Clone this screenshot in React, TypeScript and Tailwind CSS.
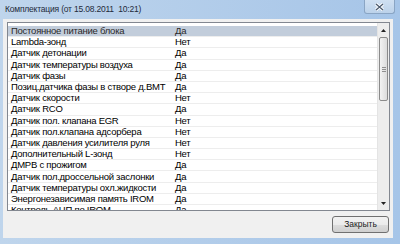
import React from "react";

type Row = { name: string; value: string };

const rows: Row[] = [
  { name: "Постоянное питание блока", value: "Да" },
  { name: "Lambda-зонд", value: "Нет" },
  { name: "Датчик детонации", value: "Да" },
  { name: "Датчик температуры воздуха", value: "Да" },
  { name: "Датчик фазы", value: "Да" },
  { name: "Позиц.датчика фазы в створе д.ВМТ", value: "Да" },
  { name: "Датчик скорости", value: "Нет" },
  { name: "Датчик RCO", value: "Да" },
  { name: "Датчик пол. клапана EGR", value: "Нет" },
  { name: "Датчик пол.клапана адсорбера", value: "Нет" },
  { name: "Датчик давления усилителя руля", value: "Нет" },
  { name: "Дополнительный L-зонд", value: "Нет" },
  { name: "ДМРВ с прожигом", value: "Да" },
  { name: "Датчик пол.дроссельной заслонки", value: "Да" },
  { name: "Датчик температуры охл.жидкости", value: "Да" },
  { name: "Энергонезависимая память IROM", value: "Да" },
  { name: "Контроль АЦП по IROM", value: "Да" },
];

export default function App() {
  return (
    <div
      className="w-[400px] h-[244px] flex flex-col bg-[linear-gradient(to_right,#bfd5ec,#a6c5e8)] text-black overflow-hidden"
      style={{ fontFamily: '"Liberation Sans", Arial, sans-serif' }}
    >
      {/* title bar */}
      <div className="h-[19px] flex items-start justify-between shrink-0">
        <div className="pl-[5px] pt-[3px] text-[8.5px] tracking-[-0.2px] leading-[12px] text-[#1e2a3a] whitespace-nowrap">
          Комплектация (от 15.08.2011&nbsp;&nbsp;10:21)
        </div>
        <button
          type="button"
          className="mr-[5px] w-[31px] h-[14px] flex items-center justify-center rounded-b-[3px] border border-t-0 border-[#8aa5c4] bg-[linear-gradient(#cfe0f2,#bcd2ea)]"
        >
          <svg width="9" height="8" viewBox="0 0 9 8">
            <path d="M1 1 L8 7 M8 1 L1 7" stroke="#ffffff" strokeWidth="3" />
            <path d="M1 1 L8 7 M8 1 L1 7" stroke="#4b5a6e" strokeWidth="1.3" />
          </svg>
        </button>
      </div>

      {/* client area */}
      <div className="flex-1 ml-[3px] mr-[7px] mb-[6px] flex flex-col bg-[#f0f0f0] pl-[4px] pr-[3px] pt-[3px]">
        <div className="h-[189px] flex border border-[#828790] bg-white overflow-hidden text-[9.5px] tracking-[-0.25px]">
          <div className="flex-1 pt-[3px] overflow-hidden">
            {rows.map((r, i) => (
              <div
                key={i}
                className={
                  "h-[11.2px] flex items-center border-b border-[#ededed] leading-[10px] " +
                  (i === 0 ? "bg-[#c2cddb] text-[#2a2a2a]" : "")
                }
              >
                <div className="w-[167px] pl-[3px] whitespace-nowrap">{r.name}</div>
                <div>{r.value}</div>
              </div>
            ))}
          </div>
          {/* scrollbar */}
          <div className="w-[12px] flex flex-col bg-[#ededed] border-l border-[#e4e4e4]">
            <div className="h-[14px] flex items-center justify-center">
              <svg width="5" height="3" viewBox="0 0 5 3">
                <path d="M0 3 L2.5 0 L5 3 Z" fill="#222" />
              </svg>
            </div>
            <div className="h-[64px] mx-[1px] rounded-[2px] border border-[#8b8b8b] bg-[linear-gradient(to_right,#f3f3f3,#dcdcdc)] flex items-center justify-center">
              <div className="w-[4px] flex flex-col gap-[1px]">
                <div className="h-px bg-[#8f8f8f]" />
                <div className="h-px bg-[#8f8f8f]" />
                <div className="h-px bg-[#8f8f8f]" />
              </div>
            </div>
            <div className="flex-1" />
            <div className="h-[14px] flex items-center justify-center">
              <svg width="5" height="3" viewBox="0 0 5 3">
                <path d="M0 0 L5 0 L2.5 3 Z" fill="#222" />
              </svg>
            </div>
          </div>
        </div>

        {/* footer */}
        <div className="flex-1 flex items-center justify-end pr-[1px]">
          <button
            type="button"
            className="w-[57px] h-[17px] rounded-[3px] border border-[#707070] bg-[linear-gradient(#f2f2f2_0%,#ebebeb_50%,#dddddd_51%,#cfcfcf_100%)] text-[8.5px] leading-[15px] text-[#1c1c1c]"
          >
            Закрыть
          </button>
        </div>
      </div>
    </div>
  );
}
